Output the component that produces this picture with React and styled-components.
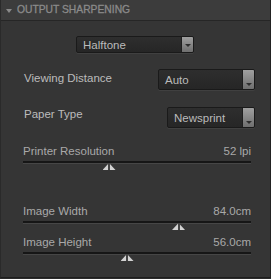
import React from "react";
import styled, { createGlobalStyle } from "styled-components";

const GlobalStyle = createGlobalStyle`
  html, body {
    margin: 0;
    padding: 0;
    background: #2c2c2c;
  }
  body {
    font-family: "Liberation Sans", Arial, sans-serif;
  }
`;

const sliders = [
  { label: "Printer Resolution", value: "52 lpi", pos: 37.5, gap: 16 },
  { label: "Image Width", value: "84.0cm", pos: 68, gap: 32 },
  { label: "Image Height", value: "56.0cm", pos: 45.4, gap: 3 },
];

const Select = ({ value, width, height, low }) => (
  <SelectBox $w={width} $h={height}>
    <SelectText>{value}</SelectText>
    <ArrowCell $low={low}>
      <ArrowDown />
    </ArrowCell>
  </SelectBox>
);

const App = () => {
  return (
    <>
      <GlobalStyle />
      <Panel>
        <Header>
          <Caret />
          <Title>Output Sharpening</Title>
        </Header>
        <Body>
          <Centered>
            <Select value="Halftone" width={118} height={17} />
          </Centered>
          <Row $mt={16}>
            <Label $pt={2}>Viewing Distance</Label>
            <Select value="Auto" width={97} height={21} low />
          </Row>
          <Row $mt={17}>
            <Label $pt={0}>Paper Type</Label>
            <Select value="Newsprint" width={88} height={21} low />
          </Row>
          {sliders.map((s) => (
            <Slider key={s.label} $mt={s.gap}>
              <SliderHead>
                <SliderLabel>{s.label}</SliderLabel>
                <SliderLabel>{s.value}</SliderLabel>
              </SliderHead>
              <Track>
                <Thumb style={{ left: `${s.pos}%` }} />
              </Track>
            </Slider>
          ))}
        </Body>
      </Panel>
    </>
  );
};

//STYLED
const Panel = styled.div`
  width: 271px;
  height: 278px;
  box-sizing: border-box;
  background: #353535;
  border-left: 1px solid #2a2a2a;
  border-right: 1px solid #222;
  border-bottom: 1px solid #1e1e1e;
  display: flex;
  flex-direction: column;
`;

const Header = styled.div`
  height: 21px;
  box-sizing: border-box;
  background: #3c3c3c;
  border-bottom: 1px solid #262626;
  display: flex;
  align-items: center;
  padding-left: 5px;
  gap: 5px;
`;

const Caret = styled.span`
  width: 0;
  height: 0;
  border-left: 3px solid transparent;
  border-right: 3px solid transparent;
  border-top: 4px solid #8a8a8a;
  margin-top: 2px;
`;

const Title = styled.span`
  font-size: 10.3px;
  letter-spacing: 0;
  text-transform: uppercase;
  color: #8a8a8a;
  -webkit-text-stroke: 0.3px #8a8a8a;
  line-height: 1;
  margin-top: 1px;
`;

const Body = styled.div`
  display: flex;
  flex-direction: column;
  padding: 15px 15px 0 22px;
`;

const Centered = styled.div`
  display: flex;
  justify-content: center;
  margin-left: -8px;
`;

const Row = styled.div`
  display: flex;
  justify-content: space-between;
  align-items: flex-start;
  margin-top: ${(p) => p.$mt}px;
  padding-left: 1px;
`;

const Label = styled.span`
  font-size: 11.5px;
  color: #bcbcbc;
  padding-top: ${(p) => p.$pt}px;
  line-height: 14px;
`;

const SelectBox = styled.div`
  width: ${(p) => p.$w}px;
  height: ${(p) => p.$h}px;
  box-sizing: border-box;
  display: flex;
  border: 1px solid #1a1a1a;
  border-radius: 2px;
  background: linear-gradient(#2e2e2e, #262626);
  box-shadow: 0 1px 0 rgba(255, 255, 255, 0.06);
  overflow: hidden;
`;

const SelectText = styled.span`
  flex: 1;
  display: flex;
  align-items: center;
  padding-left: 6px;
  font-size: 11.5px;
  color: #bbbbbb;
`;

const ArrowCell = styled.span`
  width: 12px;
  display: flex;
  justify-content: center;
  align-items: ${(p) => (p.$low ? "flex-end" : "center")};
  padding-bottom: ${(p) => (p.$low ? 3 : 0)}px;
  padding-top: ${(p) => (p.$low ? 0 : 2)}px;
  box-sizing: border-box;
  background: linear-gradient(#a0a0a0, #6f6f6f);
  border-left: 1px solid #1e1e1e;
`;

const ArrowDown = styled.span`
  width: 0;
  height: 0;
  border-left: 3px solid transparent;
  border-right: 3px solid transparent;
  border-top: 3px solid #2e2e2e;
`;

const Slider = styled.div`
  display: flex;
  flex-direction: column;
  margin-top: ${(p) => p.$mt}px;
  padding-right: 4px;
`;

const SliderHead = styled.div`
  display: flex;
  justify-content: space-between;
  line-height: 14px;
`;

const SliderLabel = styled.span`
  font-size: 11.5px;
  color: #a9a9a9;
`;

const Track = styled.div`
  position: relative;
  margin-top: 3px;
  height: 2px;
  background: #161616;
  border-bottom: 1px solid #464646;
  margin-bottom: 8px;
`;

const Thumb = styled.span`
  position: absolute;
  top: 2px;
  width: 13px;
  height: 7px;
  margin-left: -6px;
  background: linear-gradient(
    90deg,
    #d2d2d2 0,
    #d2d2d2 5.5px,
    #444 5.5px,
    #444 7.5px,
    #d2d2d2 7.5px
  );
  clip-path: polygon(50% 0, 100% 100%, 0 100%);
`;

export default App;
